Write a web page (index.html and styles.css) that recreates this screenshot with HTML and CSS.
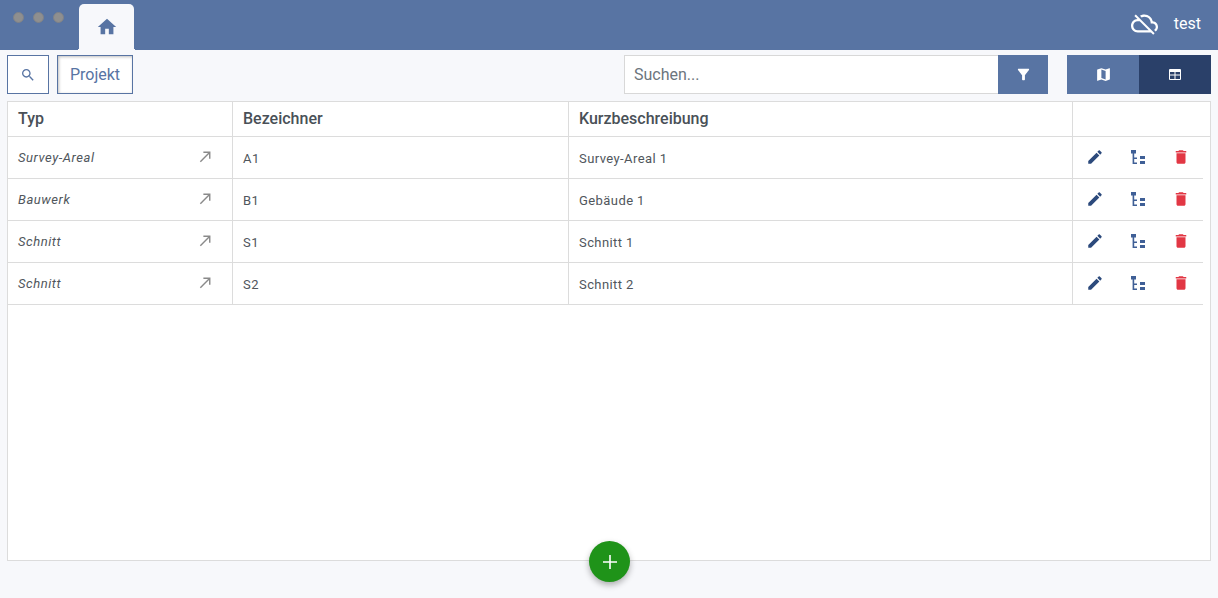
FILE: index.html
```html
<!DOCTYPE html>
<html lang="de">
<head>
<meta charset="utf-8">
<title>Projekt</title>
<link rel="stylesheet" href="styles.css">
</head>
<body>
<div class="topbar">
  <div class="dots"><span class="dot"></span><span class="dot"></span><span class="dot"></span></div>
  <div class="tab">
    <svg class="home-icon" viewBox="0 0 24 24"><path d="M10 20v-6h4v6h5v-8h3L12 3 2 12h3v8z"/></svg>
  </div>
  <div class="user">
    <svg class="cloud-icon" viewBox="0 0 24 24"><path d="M19.35 10.04C18.67 6.59 15.64 4 12 4c-1.48 0-2.85.43-4.01 1.17l1.46 1.46C10.21 6.23 11.08 6 12 6c3.04 0 5.5 2.46 5.5 5.5v.5H19c1.66 0 3 1.34 3 3 0 1.13-.64 2.11-1.56 2.62l1.45 1.45C23.16 18.16 24 16.68 24 15c0-2.64-2.05-4.78-4.65-4.96zM3 5.27l2.75 2.74C2.56 8.15 0 10.77 0 14c0 3.31 2.69 6 6 6h11.73l2 2L21 20.73 4.27 4 3 5.27zM7.73 10l8 8H6c-2.21 0-4-1.79-4-4s1.79-4 4-4h1.73z"/></svg>
    <span class="user-name">test</span>
  </div>
</div>

<div class="toolbar">
  <button class="tool-btn search-btn">
    <svg class="search-icon" viewBox="0 0 24 24"><path d="M15.5 14h-.79l-.28-.27C15.41 12.59 16 11.11 16 9.5 16 5.91 13.09 3 9.5 3S3 5.91 3 9.5 5.91 16 9.5 16c1.61 0 3.09-.59 4.23-1.57l.27.28v.79l5 4.99L20.49 19l-4.99-5zm-6 0C7.01 14 5 11.99 5 9.5S7.01 5 9.5 5 14 7.01 14 9.5 11.99 14 9.5 14z"/></svg>
  </button>
  <button class="tool-btn project-btn">Projekt</button>
  <div class="search-group">
    <div class="search-input">Suchen...</div>
    <button class="filter-btn">
      <svg class="filter-icon" viewBox="0 0 24 24"><path d="M4.25 5.61C6.27 8.2 10 13 10 13v6c0 .55.45 1 1 1h2c.55 0 1-.45 1-1v-6s3.72-4.8 5.74-7.39c.51-.66.04-1.61-.79-1.61H5.04c-.83 0-1.3.95-.79 1.61z"/></svg>
    </button>
  </div>
  <div class="view-switch">
    <button class="view-btn">
      <svg class="map-icon" viewBox="0 0 24 24"><path d="M20.5 3l-.16.03L15 5.1 9 3 3.36 4.9c-.21.07-.36.25-.36.48V20.5c0 .28.22.5.5.5l.16-.03L9 18.9l6 2.1 5.64-1.9c.21-.07.36-.25.36-.48V3.5c0-.28-.22-.5-.5-.5zM15 19l-6-2.11V5l6 2.11V19z"/></svg>
    </button>
    <button class="view-btn active">
      <svg class="table-icon" viewBox="0 0 12 11"><path fill-rule="evenodd" d="M1 0h10a1 1 0 0 1 1 1v9a1 1 0 0 1-1 1H1a1 1 0 0 1-1-1V1a1 1 0 0 1 1-1zM1 3v2.6h4.5V3zM6.5 3v2.6H11V3zM1 6.6V10h4.5V6.6zM6.5 6.6V10H11V6.6z"/></svg>
    </button>
  </div>
</div>

<div class="panel">
  <div class="row head">
    <div class="cell">Typ</div>
    <div class="cell">Bezeichner</div>
    <div class="cell">Kurzbeschreibung</div>
    <div class="cell"></div>
  </div>

  <div class="row">
    <div class="cell type"><span>Survey-Areal</span><svg class="jump" viewBox="0 0 24 24"><path d="M9 5v2h6.59L4 18.59 5.41 20 17 8.41V15h2V5z"/></svg></div>
    <div class="cell">A1</div>
    <div class="cell">Survey-Areal 1</div>
    <div class="cell actions">
      <svg class="act edit" viewBox="0 0 24 24"><path d="M3 17.25V21h3.75L17.81 9.94l-3.75-3.75L3 17.25zM20.71 7.04c.39-.39.39-1.02 0-1.41l-2.34-2.34c-.39-.39-1.02-.39-1.41 0l-1.83 1.83 3.75 3.75 1.83-1.83z"/></svg>
      <svg class="act tree" viewBox="0 0 16 16"><path d="M1 1h5v3.5H4.2v4h2.8V10H4.2v3.5h2.8V15H2.6V4.5H1zM10 7h5v3h-5zM10 12h5v3h-5z"/></svg>
      <svg class="act trash" viewBox="0 0 24 24"><path d="M6 19c0 1.1.9 2 2 2h8c1.1 0 2-.9 2-2V7H6v12zM19 4h-3.5l-1-1h-5l-1 1H5v2h14V4z"/></svg>
    </div>
  </div>

  <div class="row">
    <div class="cell type"><span>Bauwerk</span><svg class="jump" viewBox="0 0 24 24"><path d="M9 5v2h6.59L4 18.59 5.41 20 17 8.41V15h2V5z"/></svg></div>
    <div class="cell">B1</div>
    <div class="cell">Gebäude 1</div>
    <div class="cell actions">
      <svg class="act edit" viewBox="0 0 24 24"><path d="M3 17.25V21h3.75L17.81 9.94l-3.75-3.75L3 17.25zM20.71 7.04c.39-.39.39-1.02 0-1.41l-2.34-2.34c-.39-.39-1.02-.39-1.41 0l-1.83 1.83 3.75 3.75 1.83-1.83z"/></svg>
      <svg class="act tree" viewBox="0 0 16 16"><path d="M1 1h5v3.5H4.2v4h2.8V10H4.2v3.5h2.8V15H2.6V4.5H1zM10 7h5v3h-5zM10 12h5v3h-5z"/></svg>
      <svg class="act trash" viewBox="0 0 24 24"><path d="M6 19c0 1.1.9 2 2 2h8c1.1 0 2-.9 2-2V7H6v12zM19 4h-3.5l-1-1h-5l-1 1H5v2h14V4z"/></svg>
    </div>
  </div>

  <div class="row">
    <div class="cell type"><span>Schnitt</span><svg class="jump" viewBox="0 0 24 24"><path d="M9 5v2h6.59L4 18.59 5.41 20 17 8.41V15h2V5z"/></svg></div>
    <div class="cell">S1</div>
    <div class="cell">Schnitt 1</div>
    <div class="cell actions">
      <svg class="act edit" viewBox="0 0 24 24"><path d="M3 17.25V21h3.75L17.81 9.94l-3.75-3.75L3 17.25zM20.71 7.04c.39-.39.39-1.02 0-1.41l-2.34-2.34c-.39-.39-1.02-.39-1.41 0l-1.83 1.83 3.75 3.75 1.83-1.83z"/></svg>
      <svg class="act tree" viewBox="0 0 16 16"><path d="M1 1h5v3.5H4.2v4h2.8V10H4.2v3.5h2.8V15H2.6V4.5H1zM10 7h5v3h-5zM10 12h5v3h-5z"/></svg>
      <svg class="act trash" viewBox="0 0 24 24"><path d="M6 19c0 1.1.9 2 2 2h8c1.1 0 2-.9 2-2V7H6v12zM19 4h-3.5l-1-1h-5l-1 1H5v2h14V4z"/></svg>
    </div>
  </div>

  <div class="row">
    <div class="cell type"><span>Schnitt</span><svg class="jump" viewBox="0 0 24 24"><path d="M9 5v2h6.59L4 18.59 5.41 20 17 8.41V15h2V5z"/></svg></div>
    <div class="cell">S2</div>
    <div class="cell">Schnitt 2</div>
    <div class="cell actions">
      <svg class="act edit" viewBox="0 0 24 24"><path d="M3 17.25V21h3.75L17.81 9.94l-3.75-3.75L3 17.25zM20.71 7.04c.39-.39.39-1.02 0-1.41l-2.34-2.34c-.39-.39-1.02-.39-1.41 0l-1.83 1.83 3.75 3.75 1.83-1.83z"/></svg>
      <svg class="act tree" viewBox="0 0 16 16"><path d="M1 1h5v3.5H4.2v4h2.8V10H4.2v3.5h2.8V15H2.6V4.5H1zM10 7h5v3h-5zM10 12h5v3h-5z"/></svg>
      <svg class="act trash" viewBox="0 0 24 24"><path d="M6 19c0 1.1.9 2 2 2h8c1.1 0 2-.9 2-2V7H6v12zM19 4h-3.5l-1-1h-5l-1 1H5v2h14V4z"/></svg>
    </div>
  </div>
</div>

<button class="fab">
  <svg class="plus-icon" viewBox="0 0 14 14"><path d="M6.2 0h1.6v6.2H14v1.6H7.8V14H6.2V7.8H0V6.2h6.2z"/></svg>
</button>
</body>
</html>
```

FILE: styles.css
```css
html, body { margin: 0; padding: 0; height: 598px; overflow: hidden; }
body { position: relative; background: #f7f8fb; font-family: Roboto, "Liberation Sans", sans-serif; color: #495057; }
button { font-family: inherit; cursor: pointer; padding: 0; }
svg { display: block; }

/* top bar */
.topbar { height: 50px; background: #5874a3; display: flex; align-items: flex-end; }
.dots { display: flex; gap: 9px; margin: 0 15px 27px 13px; align-self: flex-end; }
.dot { width: 11px; height: 11px; box-sizing: border-box; border-radius: 50%; background: #8f8f8f; border: 1px solid #7f8289; }
.tab { position: relative; width: 55px; height: 46px; background: #f7f8fb; border-radius: 5px 5px 0 0; display: flex; justify-content: center; padding-top: 12px; box-sizing: border-box; }
.tab::before, .tab::after { content: ""; position: absolute; bottom: 0; width: 3px; height: 3px; }
.tab::before { left: -3px; background: radial-gradient(circle at 0 0, transparent 3px, #f7f8fb 3px); }
.tab::after { right: -3px; background: radial-gradient(circle at 100% 0, transparent 3px, #f7f8fb 3px); }
.home-icon { width: 22px; height: 22px; fill: #5874a3; }
.user { margin-left: auto; margin-right: 17px; display: flex; align-items: center; gap: 16px; height: 50px; }
.cloud-icon { width: 27px; height: 27px; fill: #fff; margin-top: -3px; }
.user-name { color: #fff; font-size: 16px; position: relative; top: -2px; }

/* toolbar */
.toolbar { display: flex; padding: 5px 7px 0; height: 39px; }
.tool-btn { height: 39px; box-sizing: border-box; background: #fff; border: 1px solid #5874a3; color: #5874a3; }
.search-btn { width: 42px; display: flex; align-items: center; justify-content: center; }
.search-icon { width: 16px; height: 16px; fill: #5874a3; }
.project-btn { width: 76px; margin-left: 8px; font-size: 16px; box-shadow: inset 1px 1px 3px rgba(0, 0, 0, .25); }
.search-group { display: flex; margin-left: 491px; }
.search-input { width: 374px; height: 39px; box-sizing: border-box; background: #fff; border: 1px solid #d8d8d8; border-right: 0; padding-left: 9px; font-size: 16px; line-height: 37px; color: #6c757d; }
.filter-btn { width: 50px; height: 39px; border: 0; background: #5874a3; display: flex; align-items: center; justify-content: center; }
.filter-icon { width: 17px; height: 17px; fill: #fff; margin-top: -1px; }
.view-switch { display: flex; margin-left: 19px; }
.view-btn { width: 72px; height: 39px; border: 0; background: #5874a3; display: flex; align-items: center; justify-content: center; }
.view-btn.active { background: #2a4069; }
.map-icon { width: 17px; height: 17px; fill: #fff; margin-top: -1px; }
.table-icon { width: 12px; height: 11px; fill: #fff; margin-top: -1px; }

/* table */
.panel { margin: 7px 7px 0; height: 460px; box-sizing: border-box; background: #fff; border: 1px solid #dcdcdc; }
.row { display: grid; grid-template-columns: 225px 336px 504px 130px; height: 42px; margin-right: 7px; border-bottom: 1px solid #dcdcdc; box-sizing: border-box; font-size: 13px; letter-spacing: .42px; color: #50565c; }
.row.head { height: 35px; margin-right: 0; grid-template-columns: 225px 336px 504px 1fr; font-size: 16px; font-weight: 500; letter-spacing: 0; color: #495057; }
.cell { display: flex; align-items: center; padding-left: 10px; padding-top: 1px; border-right: 1px solid #dcdcdc; }
.cell:last-child { border-right: 0; }
.row.head .cell { padding-top: 0; padding-bottom: 1px; }
.type { font-style: italic; justify-content: space-between; padding-top: 0; padding-bottom: 1px; letter-spacing: .55px; }
.jump { width: 17px; height: 17px; fill: #8a8a8a; margin-right: 18px; margin-top: -1px; }
.actions { padding-left: 13px; padding-top: 0; gap: 27px; }
.act { flex: none; margin-top: -1px; }
.edit { width: 18px; height: 18px; fill: #2c4a7c; }
.tree { width: 16px; height: 16px; fill: #3f5f96; margin-left: -1px; }
.trash { width: 18px; height: 18px; fill: #e23744; margin-left: -1px; }

/* floating add button */
.fab { position: absolute; left: 589px; top: 541px; width: 41px; height: 41px; border: 0; border-radius: 50%; background: #1f9319; box-shadow: 0 3px 6px rgba(0, 0, 0, .3); display: flex; align-items: center; justify-content: center; }
.plus-icon { width: 14px; height: 14px; fill: #fff; }
```
